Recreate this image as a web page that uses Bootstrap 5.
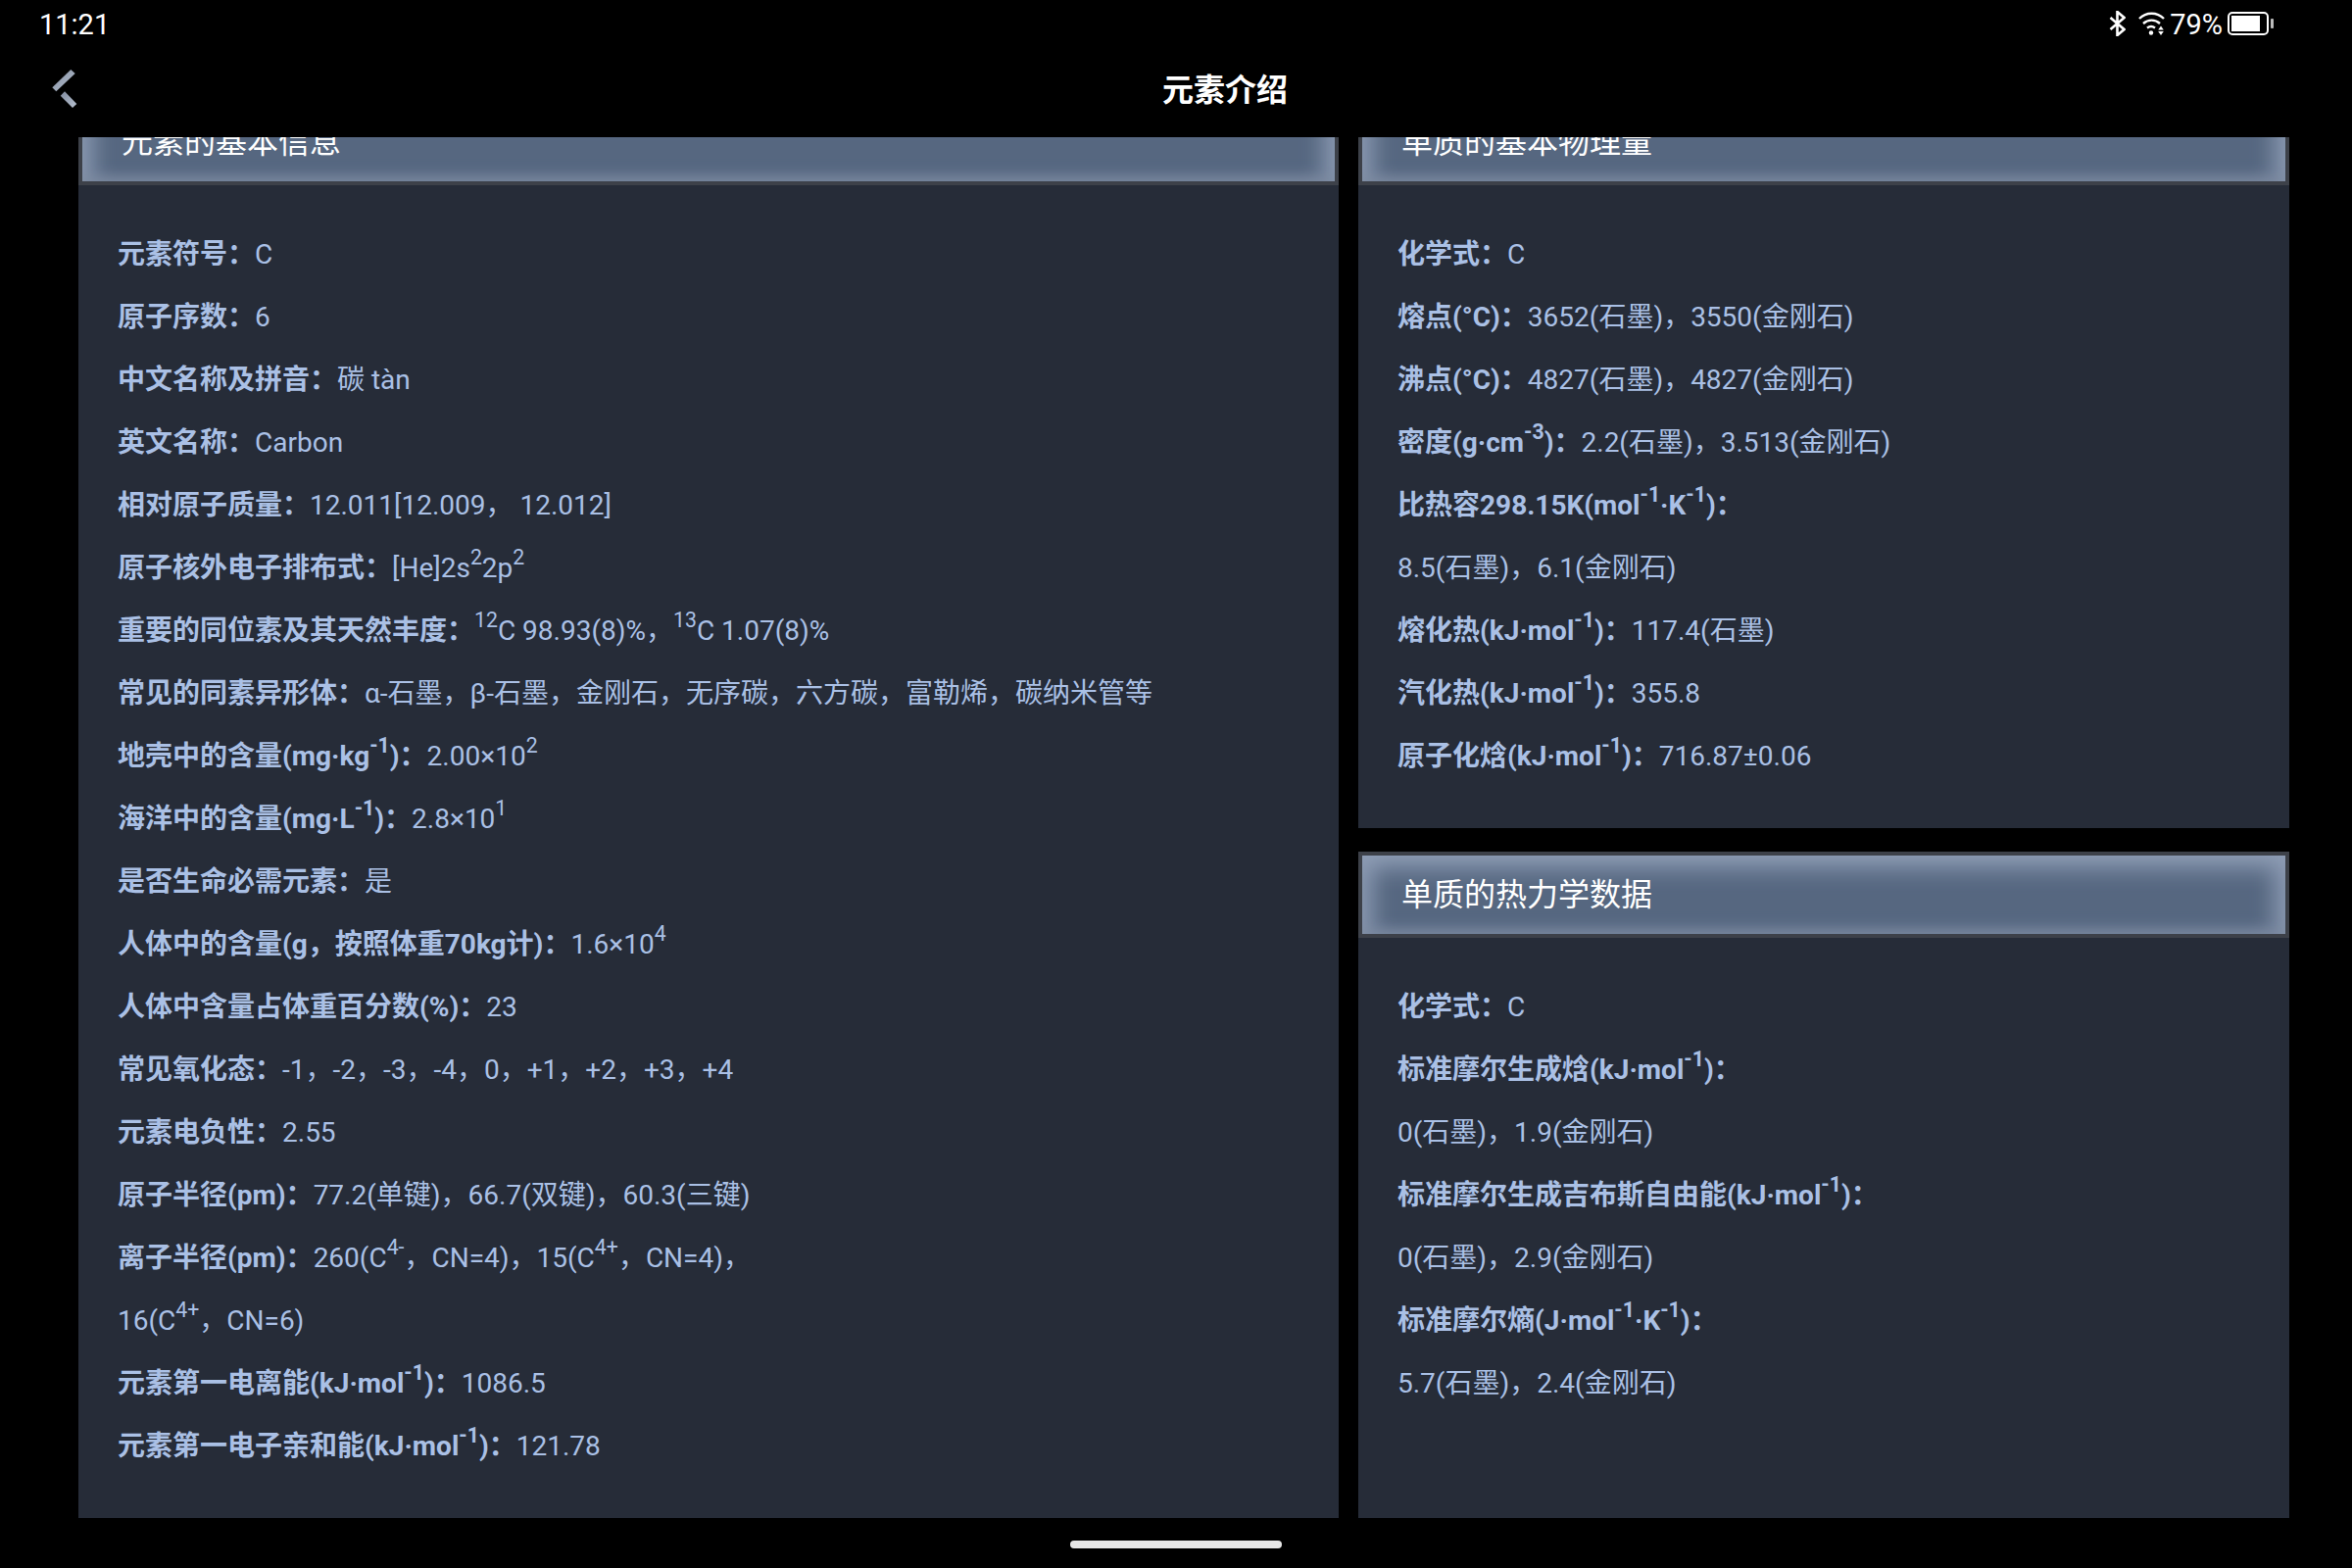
<!DOCTYPE html>
<html lang="zh">
<head>
<meta charset="utf-8">
<title>元素介绍</title>
<link href="https://cdn.jsdelivr.net/npm/bootstrap@5.3.0/dist/css/bootstrap.min.css" rel="stylesheet">
<style>
html,body{height:1600px;overflow:hidden;background:#000;}
body{font-family:Roboto,"Noto Sans CJK SC",sans-serif;color:#aac0e5;}
.phone-shell{width:2400px;height:1600px;background:#000;}
.status-strip{height:48px;padding:0 80px 0 40px;color:#fff;font-size:29px;line-height:48px;}
.status-time{margin-top:2px;}
.status-pct{font-size:29px;margin:1px 5px 0 5px;}
.status-wifi{margin-left:13px;}
.title-strip{height:92px;padding:0 0 0 100px;}
.back-slot{left:50px;top:68px;}
.page-title{font-size:32px;font-weight:700;color:#fff;line-height:88px;}
.scroll-area{height:1409px;padding:0 64px 0 80px;gap:20px;overflow:hidden;}
.col-main{width:1286px;flex:none;margin-top:-39px;}
.col-side{width:950px;flex:none;gap:24px;margin-top:-39px;}
.info-panel{background:#262c38;}
.panel-head{height:88px;border:4px solid #3d4149;background:#566780;box-shadow:inset 0 22px 24px -10px #8e9db5,inset 0 -12px 16px -8px #7a889e,inset 22px 0 22px -10px #8796ae,inset -22px 0 22px -10px #8796ae;color:#fff;font-size:32px;line-height:80px;padding-left:40px;}
.panel-body-text{padding:39px 40px 41px;font-size:28px;line-height:64px;}
.panel-body-text p{margin:0;height:64px;white-space:nowrap;}
.panel-body-text b{font-weight:700;}
.panel-body-text sup{font-size:76%;top:-.6em;}
.home-bar{width:216px;height:8px;border-radius:4px;background:#e8e8e8;margin:23px auto 0;}
</style>
</head>
<body>
<div class="phone-shell position-relative">
  <div class="status-strip d-flex justify-content-between align-items-center">
    <span class="status-time">11:21</span>
    <span class="d-flex align-items-center">
      <svg width="17" height="26" viewBox="0 0 17 26" fill="none" stroke="#fff" stroke-width="2.6"><path d="M1.5 7l14 12-7 6V1l7 6-14 12"/></svg>
      <svg class="status-wifi" width="27" height="24" viewBox="0 0 27 24" fill="none" stroke="#fff" stroke-width="2.4"><path d="M1 7c7-7 18-7 25 0M5 12c5-4.500 12-4.500 17 0M9 16.500c2.500-2 5.500-2 8 0"/><circle cx="13" cy="21.500" r="2.200" fill="#fff" stroke="none"/><path d="M23 14.500l-2.800 4h5.600zM23 24l-2.800-4h5.600z" fill="#fff" stroke="none"/></svg>
      <span class="status-pct">79%</span>
      <svg width="47" height="24" viewBox="0 0 47 24"><rect x="1" y="1" width="40" height="22" rx="4" fill="none" stroke="#fff" stroke-width="2"/><rect x="4" y="4" width="29" height="16" fill="#fff"/><rect x="44" y="7" width="3" height="10" rx="1" fill="#bbb"/></svg>
    </span>
  </div>
  <div class="title-strip d-flex justify-content-center">
    <span class="page-title">元素介绍</span>
  </div>
  <svg class="back-slot position-absolute" width="30" height="44" viewBox="0 0 30 44"><defs><linearGradient id="bk" x1="0" y1="0" x2="1" y2="1"><stop offset="0" stop-color="#808b9e"/><stop offset="1" stop-color="#b8c2d0"/></linearGradient></defs><path d="M3.300 21.300L22.300 3l4.400 4L7.300 25.300z" fill="url(#bk)"/><path d="M11.700 29.700l4.300-4.400L28.300 38 24 42z" fill="url(#bk)"/></svg>
  <div class="scroll-area d-flex">
    <div class="col-main info-panel">
      <div class="panel-head">元素的基本信息</div>
      <div class="panel-body-text">
        <p><b>元素符号：</b>C</p>
        <p><b>原子序数：</b>6</p>
        <p><b>中文名称及拼音：</b>碳 tàn</p>
        <p><b>英文名称：</b>Carbon</p>
        <p><b>相对原子质量：</b>12.011[12.009， 12.012]</p>
        <p><b>原子核外电子排布式：</b>[He]2s<sup>2</sup>2p<sup>2</sup></p>
        <p><b>重要的同位素及其天然丰度：</b><sup>12</sup>C 98.93(8)%，<sup>13</sup>C 1.07(8)%</p>
        <p><b>常见的同素异形体：</b>α-石墨，β-石墨，金刚石，无序碳，六方碳，富勒烯，碳纳米管等</p>
        <p><b>地壳中的含量(mg·kg<sup>-1</sup>)：</b>2.00×10<sup>2</sup></p>
        <p><b>海洋中的含量(mg·L<sup>-1</sup>)：</b>2.8×10<sup>1</sup></p>
        <p><b>是否生命必需元素：</b>是</p>
        <p><b>人体中的含量(g，按照体重70kg计)：</b>1.6×10<sup>4</sup></p>
        <p><b>人体中含量占体重百分数(%)：</b>23</p>
        <p><b>常见氧化态：</b>-1，-2，-3，-4，0，+1，+2，+3，+4</p>
        <p><b>元素电负性：</b>2.55</p>
        <p><b>原子半径(pm)：</b>77.2(单键)，66.7(双键)，60.3(三键)</p>
        <p><b>离子半径(pm)：</b>260(C<sup>4-</sup>，CN=4)，15(C<sup>4+</sup>，CN=4)，</p>
        <p>16(C<sup>4+</sup>，CN=6)</p>
        <p><b>元素第一电离能(kJ·mol<sup>-1</sup>)：</b>1086.5</p>
        <p><b>元素第一电子亲和能(kJ·mol<sup>-1</sup>)：</b>121.78</p>
      </div>
    </div>
    <div class="col-side d-flex flex-column">
      <div class="info-panel">
        <div class="panel-head">单质的基本物理量</div>
        <div class="panel-body-text">
          <p><b>化学式：</b>C</p>
          <p><b>熔点(°C)：</b>3652(石墨)，3550(金刚石)</p>
          <p><b>沸点(°C)：</b>4827(石墨)，4827(金刚石)</p>
          <p><b>密度(g·cm<sup>-3</sup>)：</b>2.2(石墨)，3.513(金刚石)</p>
          <p><b>比热容298.15K(mol<sup>-1</sup>·K<sup>-1</sup>)：</b></p>
          <p>8.5(石墨)，6.1(金刚石)</p>
          <p><b>熔化热(kJ·mol<sup>-1</sup>)：</b>117.4(石墨)</p>
          <p><b>汽化热(kJ·mol<sup>-1</sup>)：</b>355.8</p>
          <p><b>原子化焓(kJ·mol<sup>-1</sup>)：</b>716.87±0.06</p>
        </div>
      </div>
      <div class="info-panel flex-grow-1">
        <div class="panel-head">单质的热力学数据</div>
        <div class="panel-body-text">
          <p><b>化学式：</b>C</p>
          <p><b>标准摩尔生成焓(kJ·mol<sup>-1</sup>)：</b></p>
          <p>0(石墨)，1.9(金刚石)</p>
          <p><b>标准摩尔生成吉布斯自由能(kJ·mol<sup>-1</sup>)：</b></p>
          <p>0(石墨)，2.9(金刚石)</p>
          <p><b>标准摩尔熵(J·mol<sup>-1</sup>·K<sup>-1</sup>)：</b></p>
          <p>5.7(石墨)，2.4(金刚石)</p>
        </div>
      </div>
    </div>
  </div>
  <div class="home-bar"></div>
</div>
<script src="https://cdn.jsdelivr.net/npm/bootstrap@5.3.0/dist/js/bootstrap.bundle.min.js"></script>
</body>
</html>
